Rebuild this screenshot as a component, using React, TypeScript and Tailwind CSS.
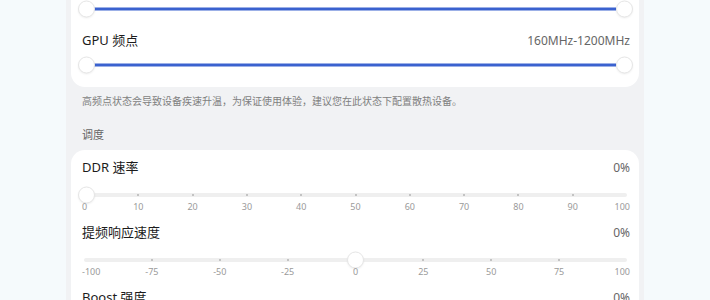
import React from "react";

const font = { fontFamily: '"Noto Sans", "Noto Sans CJK SC", sans-serif' };

function Thumb({ left }: { left: number }) {
  return (
    <div
      className="absolute top-1/2 w-[17px] h-[17px] -translate-y-1/2 rounded-full bg-white border border-[#e6e6e6] shadow-[0_1px_2px_rgba(0,0,0,0.06)]"
      style={{ left }}
    />
  );
}

function RangeSlider() {
  return (
    <div className="relative h-[18px]">
      <div className="absolute left-[16px] right-[16px] top-1/2 -translate-y-1/2 h-[3px] bg-[#3b62cf]" />
      <Thumb left={0} />
      <Thumb left={538} />
    </div>
  );
}

function TickSlider({
  labels,
  thumbLeft,
}: {
  labels: string[];
  thumbLeft: number;
}) {
  const n = labels.length - 1;
  return (
    <div className="mx-[6px] mr-[5px]">
      <div className="relative h-[14px] mt-[11px]">
        <div className="absolute left-0 right-0 top-1/2 -translate-y-1/2 h-[4px] rounded-full bg-[#efefef]" />
        {labels.map((_, i) =>
          i === 0 || i === n ? null : (
            <div
              key={i}
              className="absolute top-1/2 w-[2px] h-[2px] -translate-x-1/2 -translate-y-1/2 rounded-full bg-[#b5b5b5]"
              style={{ left: `${(i / n) * 100}%` }}
            />
          )
        )}
        <Thumb left={thumbLeft} />
      </div>
      <div className="relative mt-[-1px] h-[12px] text-[9px] leading-[12px] text-[#9a9a9a]">
        {labels.map((l, i) => (
          <span
            key={i}
            className={
              i === 0
                ? "absolute left-[-2px]"
                : i === n
                ? "absolute right-[-3px]"
                : "absolute -translate-x-1/2"
            }
            style={i === 0 || i === n ? undefined : { left: `${(i / n) * 100}%` }}
          >
            {l}
          </span>
        ))}
      </div>
    </div>
  );
}

function Block({
  title,
  labels,
  thumbLeft,
}: {
  title: string;
  labels: string[];
  thumbLeft: number;
}) {
  return (
    <div className="mb-[11px]">
      <div className="flex h-[18px] items-center justify-between pl-[4px] pr-[2px]">
        <span className="text-[13px] text-[#1c1c1c]">{title}</span>
        <span className="text-[12px] text-[#666]">0%</span>
      </div>
      <TickSlider labels={labels} thumbLeft={thumbLeft} />
    </div>
  );
}

export default function App() {
  return (
    <div
      className="flex w-[710px] h-[300px] overflow-hidden bg-[#f5fafc]"
      style={font}
    >
      <div className="w-[66px] shrink-0" />
      <div className="w-[578px] shrink-0 bg-[#f1f2f4] px-[5px]">
        <div className="rounded-b-[14px] bg-white px-[7px] pb-[13px]">
          <RangeSlider />
          <div className="mt-[14px] flex h-[18px] items-center justify-between pl-[4px] pr-[2px]">
            <span className="text-[13px] text-[#1c1c1c]">GPU 频点</span>
            <span className="text-[12px] text-[#666]">160MHz-1200MHz</span>
          </div>
          <div className="mt-[6px]">
            <RangeSlider />
          </div>
        </div>
        <div className="mt-[7px] pl-[11px] text-[10px] leading-[14px] text-[#7f7f7f]">
          高频点状态会导致设备疾速升温，为保证使用体验，建议您在此状态下配置散热设备。
        </div>
        <div className="mt-[19px] pl-[11px] text-[11px] leading-[16px] text-[#666]">
          调度
        </div>
        <div className="mt-[7px] rounded-t-[14px] bg-white px-[7px] pt-[9px]">
          <Block
            title="DDR 速率"
            labels={["0", "10", "20", "30", "40", "50", "60", "70", "80", "90", "100"]}
            thumbLeft={-6}
          />
          <Block
            title="提频响应速度"
            labels={["-100", "-75", "-50", "-25", "0", "25", "50", "75", "100"]}
            thumbLeft={263}
          />
          <Block
            title="Boost 强度"
            labels={["0", "10", "20", "30", "40", "50", "60", "70", "80", "90", "100"]}
            thumbLeft={-6}
          />
        </div>
      </div>
      <div className="flex-1" />
    </div>
  );
}
